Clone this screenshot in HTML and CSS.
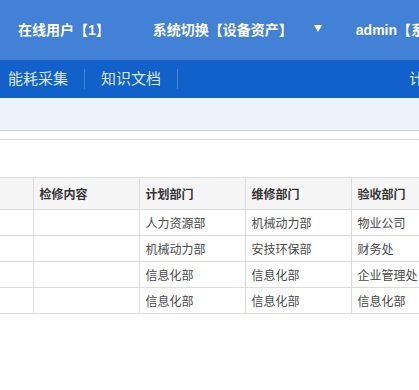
FILE: index.html
```html
<!DOCTYPE html>
<html lang="zh-CN">

<head>
  <meta charset="UTF-8">
  <meta name="viewport" content="width=device-width, initial-scale=1.0">
  <title>检修计划</title>

  <link rel="stylesheet" href="styles.css">
</head>

<body>
  <div class="topbar">
    <span class="top-item online">在线用户【1】</span>
    <span class="top-item system">系统切换【设备资产】<i class="caret"></i></span>
    <span class="top-item">admin【系统管理员】</span>
  </div>

  <div class="nav">
    <a class="nav-item">能耗采集</a>
    <a class="nav-item">知识文档</a>
    <a class="nav-item nav-right">计划管理</a>
  </div>

  <div class="toolbar"></div>

  <div class="content">
    <table class="grid">
      <colgroup>
        <col class="col-first">
        <col class="col-normal">
        <col class="col-normal">
        <col class="col-normal">
        <col class="col-normal">
      </colgroup>
      <thead>
        <tr>
          <th class="cell-first"></th>
          <th>检修内容</th>
          <th>计划部门</th>
          <th>维修部门</th>
          <th>验收部门</th>
        </tr>
      </thead>
      <tbody>
        <tr>
          <td class="cell-first"></td>
          <td></td>
          <td>人力资源部</td>
          <td>机械动力部</td>
          <td>物业公司</td>
        </tr>
        <tr>
          <td class="cell-first"></td>
          <td></td>
          <td>机械动力部</td>
          <td>安技环保部</td>
          <td>财务处</td>
        </tr>
        <tr>
          <td class="cell-first"></td>
          <td></td>
          <td>信息化部</td>
          <td>信息化部</td>
          <td>企业管理处</td>
        </tr>
        <tr>
          <td class="cell-first"></td>
          <td></td>
          <td>信息化部</td>
          <td>信息化部</td>
          <td>信息化部</td>
        </tr>
      </tbody>
    </table>
  </div>
</body>

</html>
```

FILE: styles.css
```css
body {
  margin: 0;
  overflow: hidden;
  font-family: "Liberation Sans", "Noto Sans CJK SC", sans-serif;
  white-space: nowrap;
}

/* 상단 바 */
.topbar {
  display: flex;
  align-items: center;
  height: 60px;
  padding-left: 18px;
  background-color: #4281d5;
  color: #fff;
  font-size: 14px;
  font-weight: bold;
}

.top-item {
  line-height: 20px;
}

.online {
  margin-right: 43px;
}

.system {
  margin-right: 34px;
}

.caret {
  display: inline-block;
  width: 0;
  height: 0;
  margin-left: 21px;
  vertical-align: 3px;
  border-left: 4.5px solid transparent;
  border-right: 4.5px solid transparent;
  border-top: 7px solid #fff;
}

/* 메뉴 */
.nav {
  display: flex;
  align-items: center;
  height: 38px;
  padding-left: 8px;
  background-color: #1260c9;
  color: #dbe9fb;
  font-size: 15px;
}

.nav-item {
  padding: 0 16px;
  line-height: 20px;
  border-right: 1px solid rgba(255, 255, 255, 0.22);
}

.nav-item:first-child {
  padding-left: 0;
}

.nav-right {
  margin-left: 215px;
  border-right: 0;
}

.toolbar {
  height: 32px;
  background-color: #ecf3fb;
  border-bottom: 1px solid #c8d5e5;
}

.content {
  padding-top: 8px;
}

.content::before {
  content: "";
  display: block;
  height: 1px;
  margin-bottom: 37px;
  background-color: #dcdcdc;
}

/* 테이블 */
.grid {
  width: 457px;
  border-collapse: collapse;
  table-layout: fixed;
  font-size: 12px;
  color: #4a4a4a;
}

.col-first {
  width: 33px;
}

.col-normal {
  width: 106px;
}

.grid th,
.grid td {
  padding: 0 6px;
  border: 1px solid #dcdcdc;
  text-align: left;
  overflow: hidden;
}

.grid th {
  height: 31px;
  background-color: #f5f5f5;
  color: #333;
  font-weight: bold;
}

.grid td {
  height: 25px;
}

.grid .cell-first {
  padding: 0;
  border-left: 0;
}
```
